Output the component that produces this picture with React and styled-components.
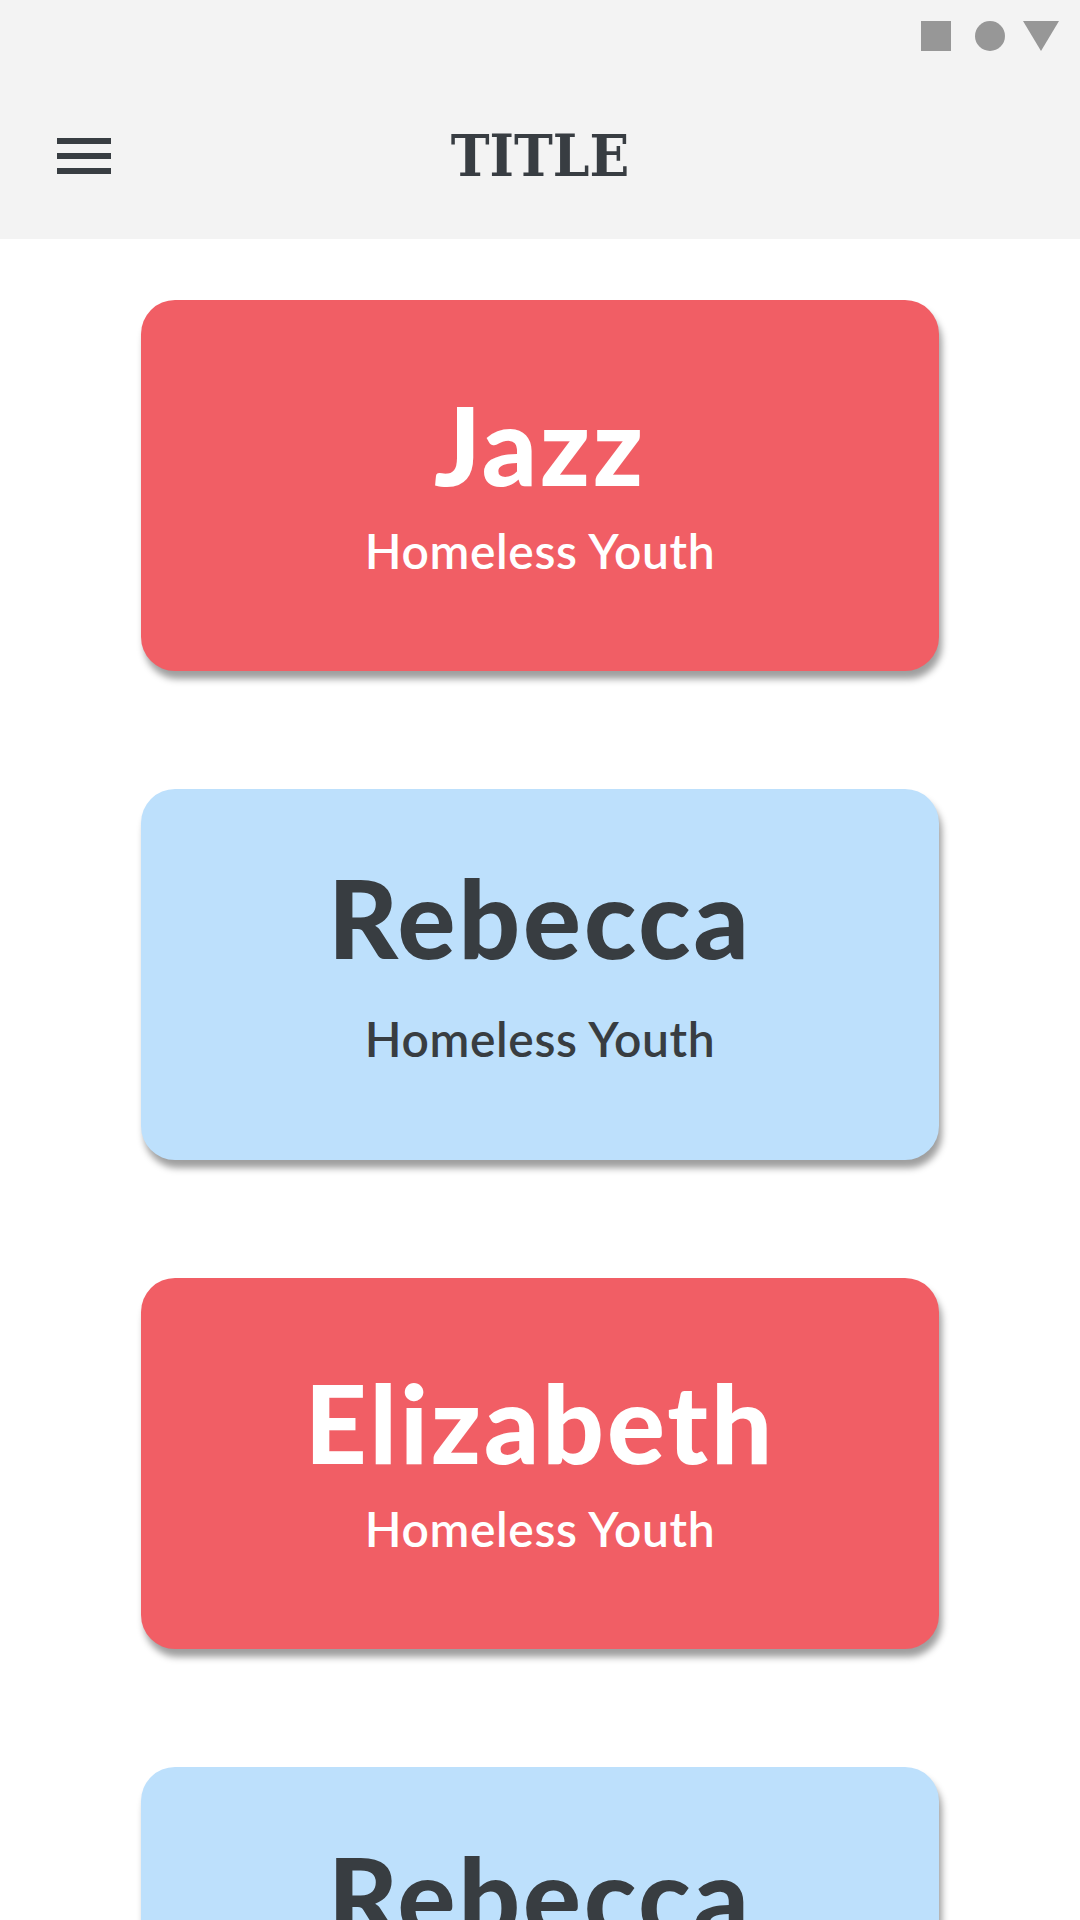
import styled, { createGlobalStyle } from "styled-components";

const GlobalStyle = createGlobalStyle`
  html, body {
    margin: 0;
    padding: 0;
    background: #ffffff;
    overflow: hidden;
  }
  * {
    box-sizing: border-box;
  }
`;

const Page = styled.div`
  width: 1080px;
  min-height: 1920px;
  background: #ffffff;
  font-family: Lato, "Noto Sans", sans-serif;
`;

const Header = styled.header`
  background: #f3f3f3;
  height: 239px;
  display: flex;
  flex-direction: column;
`;

const StatusBar = styled.div`
  display: flex;
  justify-content: flex-end;
  align-items: flex-start;
  gap: 18px;
  padding: 21px 21px 0 0;
  height: 72px;
`;

const StatusSquare = styled.span`
  width: 30px;
  height: 30px;
  margin-right: 6px;
  background: #979797;
`;

const StatusCircle = styled.span`
  width: 30px;
  height: 30px;
  border-radius: 50%;
  background: #979797;
`;

const StatusTriangle = styled.span`
  width: 0;
  height: 0;
  border-left: 18px solid transparent;
  border-right: 18px solid transparent;
  border-top: 30px solid #979797;
`;

const Toolbar = styled.div`
  flex: 1;
  display: grid;
  grid-template-columns: 1fr auto 1fr;
  align-items: center;
  padding: 0 57px;
`;

const Hamburger = styled.button`
  width: 54px;
  height: 36px;
  padding: 0;
  border: 0;
  background: transparent;
  display: flex;
  flex-direction: column;
  justify-content: space-between;
  justify-self: start;
`;

const HamburgerLine = styled.span`
  display: block;
  height: 6px;
  width: 100%;
  background: #383d42;
`;

const Title = styled.h1`
  margin: 0;
  font-family: "DejaVu Serif", "Liberation Serif", serif;
  font-stretch: condensed;
  font-weight: 700;
  font-size: 58px;
  line-height: 1;
  color: #383d42;
  letter-spacing: 0;
`;

const CardList = styled.main`
  display: flex;
  flex-direction: column;
  align-items: center;
  gap: 118px;
  padding: 61px 0 80px;
`;

const Card = styled.div`
  width: 798px;
  height: 371px;
  flex-shrink: 0;
  border-radius: 34px;
  background: ${(p) => (p.$tone === "red" ? "#f15e65" : "#bde0fc")};
  color: ${(p) => (p.$tone === "red" ? "#ffffff" : "#383d41")};
  box-shadow: 3px 8px 7px rgba(0, 0, 0, 0.38);
  display: flex;
  flex-direction: column;
  align-items: center;
  padding-top: ${(p) => (p.$tone === "red" ? "90px" : "74px")};
`;

const Name = styled.div`
  font-size: 108px;
  font-weight: 900;
  line-height: 1;
  letter-spacing: 3px;
  margin-bottom: ${(p) => (p.$tone === "red" ? "29px" : "44px")};
`;

const Role = styled.div`
  font-size: 48px;
  font-weight: 600;
  line-height: 1;
  letter-spacing: 0.6px;
`;

const people = [
  { name: "Jazz", role: "Homeless Youth", tone: "red" },
  { name: "Rebecca", role: "Homeless Youth", tone: "blue" },
  { name: "Elizabeth", role: "Homeless Youth", tone: "red" },
  { name: "Rebecca", role: "Homeless Youth", tone: "blue" },
];

export default function App() {
  return (
    <Page>
      <GlobalStyle />
      <Header>
        <StatusBar>
          <StatusSquare />
          <StatusCircle />
          <StatusTriangle />
        </StatusBar>
        <Toolbar>
          <Hamburger aria-label="menu">
            <HamburgerLine />
            <HamburgerLine />
            <HamburgerLine />
          </Hamburger>
          <Title>TITLE</Title>
        </Toolbar>
      </Header>
      <CardList>
        {people.map((p, i) => (
          <Card key={i} $tone={p.tone}>
            <Name $tone={p.tone}>{p.name}</Name>
            <Role>{p.role}</Role>
          </Card>
        ))}
      </CardList>
    </Page>
  );
}
